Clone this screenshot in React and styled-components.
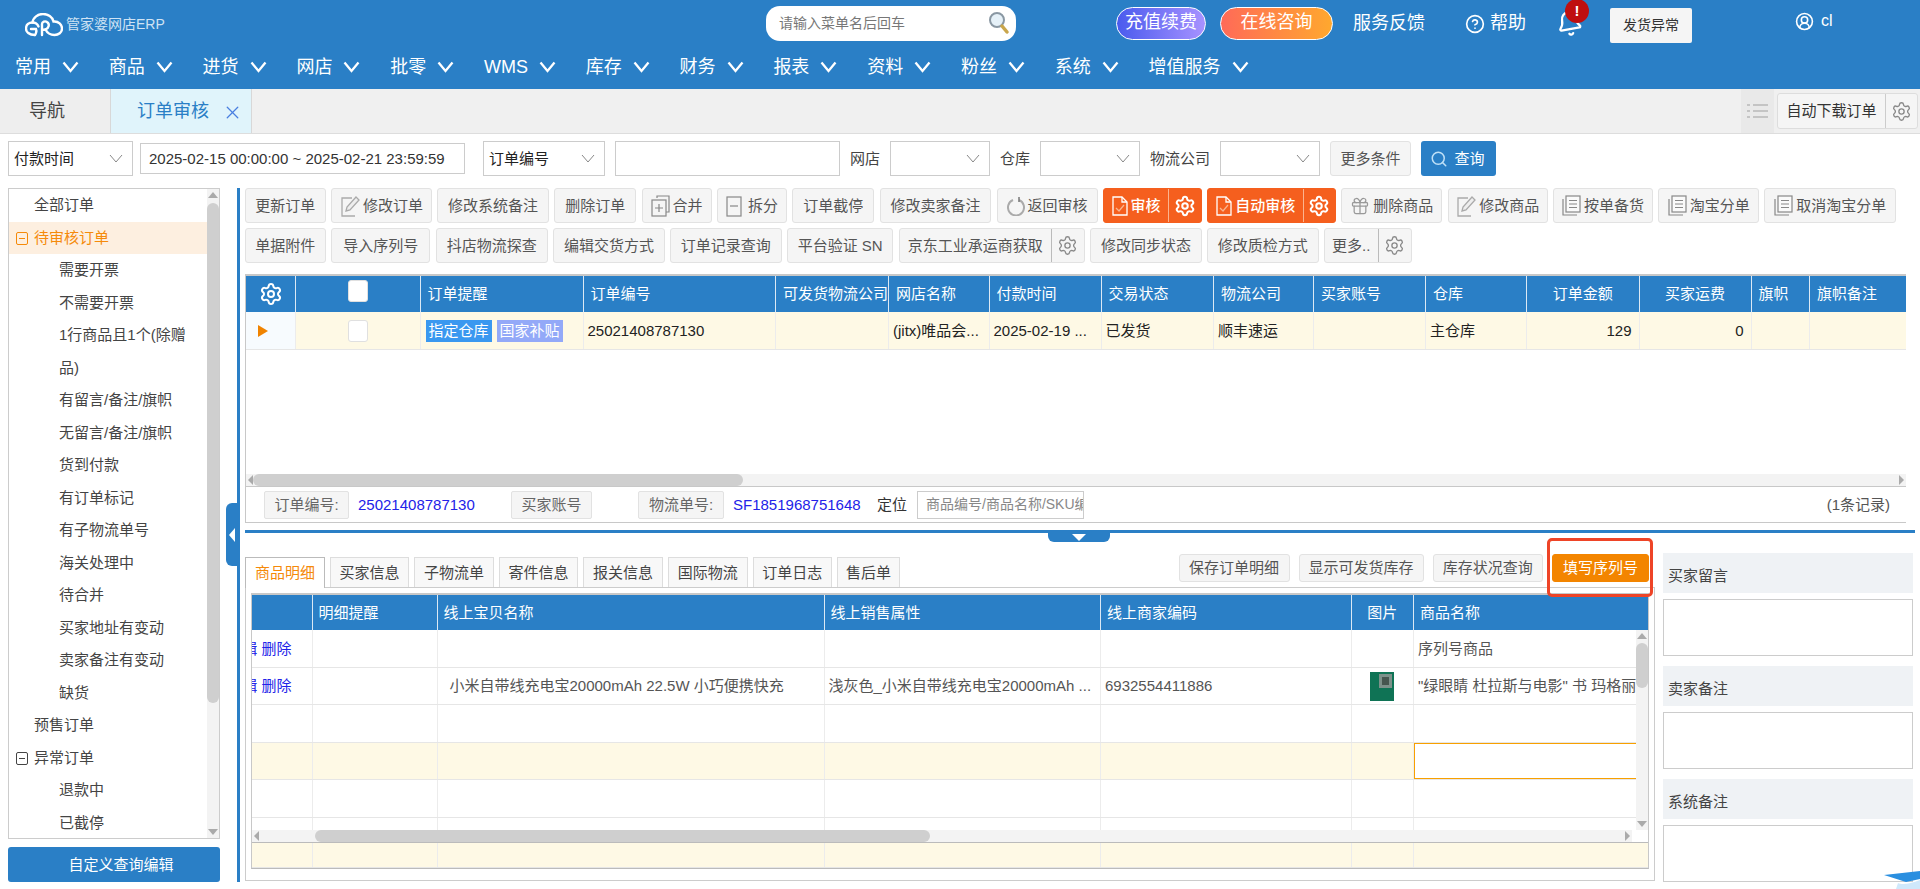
import React from "react";
import styled, { createGlobalStyle } from "styled-components";
import { Settings, Bell, CircleHelp, CircleUserRound, X, Gift, Search } from "lucide-react";

const BLUE = "#2a7fc6";
const CREAM = "#fef9e5";
const FONT = `"Liberation Sans", "Noto Sans CJK SC", sans-serif`;

const GlobalStyle = createGlobalStyle`
  html, body {
    margin: 0;
    height: 100%;
    overflow: hidden;
    background: #fff;
    font-family: ${FONT};
    font-size: 15px;
    line-height: 1.3;
    color: #333;
  }
  * { box-sizing: border-box; }
  svg { flex: none; }
`;

const Page = styled.div`
  position: relative;
  width: 1920px;
  height: 889px;
  overflow: hidden;
`;

/* ---------- header ---------- */
const Header = styled.header`
  height: 89px;
  background: ${BLUE};
  color: #fff;
`;
const TopBar = styled.div`
  height: 46px;
  display: flex;
  align-items: center;
  padding-left: 25px;
`;
const Logo = styled.div`
  width: 139px;
  display: flex;
  align-items: center;
  gap: 3px;
  font-size: 14px;
  color: #cfe3f4;
  white-space: nowrap;
  margin-top: 3px;
`;
const SearchBox = styled.div`
  width: 250px;
  height: 35px;
  margin-left: 602px;
  background: #fff;
  border-radius: 14px;
  display: flex;
  align-items: center;
  justify-content: space-between;
  padding: 0 5px 0 13px;
  font-size: 14px;
  color: #777;
`;
const Pill = styled.div`
  height: 33px;
  width: ${(p) => p.$w}px;
  margin-left: ${(p) => p.$ml}px;
  border: 1px solid #fff;
  border-radius: 17px;
  background: linear-gradient(90deg, ${(p) => p.$from}, ${(p) => p.$to});
  display: flex;
  align-items: center;
  justify-content: center;
  font-size: 18px;
`;
const TopLink = styled.div`
  margin-left: ${(p) => p.$ml}px;
  margin-top: 2px;
  font-size: 18px;
  display: flex;
  align-items: center;
  gap: 5px;
  white-space: nowrap;
`;
const BellWrap = styled.div`
  position: relative;
  width: 26px;
  height: 28px;
  margin-left: 30px;
  margin-top: 2px;
  svg { transform: rotate(-10deg); }
`;
const Badge = styled.span`
  position: absolute;
  left: 9px;
  top: -11px;
  width: 24px;
  height: 24px;
  border-radius: 50%;
  background: #bf0f0f;
  font-size: 15px;
  font-weight: 700;
  display: flex;
  align-items: center;
  justify-content: center;
`;
const ShipAlert = styled.div`
  width: 82px;
  height: 35px;
  margin-left: 28px;
  margin-top: 5px;
  background: #f5f5f5;
  border-radius: 2px;
  color: #333;
  font-size: 14px;
  display: flex;
  align-items: center;
  justify-content: center;
`;
const UserBox = styled.div`
  margin-left: 103px;
  margin-top: -3px;
  display: flex;
  align-items: center;
  gap: 7px;
  font-size: 16px;
`;
const NavBar = styled.nav`
  height: 43px;
  display: flex;
  align-items: center;
  gap: 29.8px;
  padding-left: 15px;
`;
const NavItem = styled.div`
  display: flex;
  align-items: center;
  gap: 11px;
  font-size: 18px;
  white-space: nowrap;
`;

/* ---------- tabs ---------- */
const TabBar = styled.div`
  height: 45px;
  display: flex;
  background: #f0f0f0;
  border-bottom: 1px solid #ddd;
`;
const HomeTab = styled.div`
  width: 110px;
  display: flex;
  align-items: center;
  justify-content: center;
  font-size: 18px;
  color: #444;
  background: #eee;
  padding: 2px 16px 0 0;
`;
const ActiveTab = styled.div`
  width: 142px;
  display: flex;
  align-items: center;
  gap: 13px;
  padding: 2px 0 0 26px;
  font-size: 18px;
  color: ${BLUE};
  background: #e0f4fb;
  border-left: 1px solid #d8d8d8;
  border-right: 1px solid #d8d8d8;
`;
const TabRight = styled.div`
  margin-left: auto;
  display: flex;
  align-items: center;
  padding-right: 2px;
`;
const ListToggle = styled.div`
  width: 33px;
  height: 44px;
  margin-right: 3px;
  background: #e9e9e9;
  display: flex;
  align-items: center;
  justify-content: center;
`;
const DownloadButton = styled.div`
  width: 141px;
  height: 36px;
  display: flex;
  align-items: center;
  background: #f5f5f5;
  border: 1px solid #ddd;
  border-radius: 3px;
  font-size: 15px;
  color: #333;
`;
const DownloadText = styled.span`
  width: 107px;
  text-align: center;
`;
const GearSlot = styled.span`
  flex: ${(p) => (p.$w ? `0 0 ${p.$w}px` : 1)};
  height: 100%;
  display: flex;
  align-items: center;
  justify-content: center;
  border-left: 1px solid ${(p) => p.$line || "#bbb"};
`;

/* ---------- filter row ---------- */
const FilterBar = styled.div`
  height: 54px;
  padding: 7px 0 0 8px;
  display: flex;
  gap: 18px;
`;
const FilterGroup = styled.div`
  height: 35px;
  display: flex;
  align-items: center;
  gap: ${(p) => p.$gap}px;
`;
const SelectBox = styled.div`
  width: ${(p) => p.$w}px;
  height: 35px;
  border: 1px solid #ccc;
  padding: 0 9px 0 5px;
  display: flex;
  align-items: center;
  justify-content: space-between;
  color: #222;
`;
const TextInput = styled.div`
  width: ${(p) => p.$w}px;
  height: ${(p) => p.$h || 35}px;
  border: 1px solid #ccc;
  padding-left: 8px;
  display: flex;
  align-items: center;
  white-space: nowrap;
  overflow: hidden;
  font-size: ${(p) => p.$size || 15}px;
  color: ${(p) => p.$color || "#333"};
`;
const FilterLabel = styled.span`
  width: ${(p) => p.$w}px;
  white-space: nowrap;
  color: #444;
  font-size: 15px;
`;
const PlainButton = styled.div`
  width: ${(p) => p.$w}px;
  height: 35px;
  background: #f5f5f5;
  border: 1px solid #e2e2e2;
  border-radius: 3px;
  display: flex;
  align-items: center;
  justify-content: center;
  color: #555;
`;
const QueryButton = styled.div`
  width: 75px;
  height: 35px;
  background: ${BLUE};
  border-radius: 3px;
  color: #fff;
  display: flex;
  align-items: center;
  justify-content: center;
  gap: 6px;
  padding-right: 2px;
`;

/* ---------- content ---------- */
const Content = styled.div`
  padding-left: 8px;
  display: flex;
  height: 694px;
`;
const Side = styled.aside`
  width: 212px;
  display: flex;
  flex-direction: column;
  gap: 8px;
`;
const TreeBox = styled.div`
  position: relative;
  height: 651px;
  border: 1px solid #ccc;
  overflow: hidden;
`;
const TreeRow = styled.div`
  width: 198px;
  line-height: 32.5px;
  padding: 0 20px 0 ${(p) => (p.$level ? 50 : 25)}px;
  position: relative;
  background: ${(p) => (p.$active ? "#fdefe0" : "transparent")};
  color: ${(p) => (p.$active ? "#f58a0a" : "#444")};
`;
const Fold = styled.span`
  position: absolute;
  left: 7px;
  top: 10px;
  width: 12px;
  height: 13px;
  border: 1px solid currentColor;
  border-radius: 2px;
  &::after {
    content: "";
    position: absolute;
    left: 2px;
    right: 2px;
    top: 5px;
    height: 1px;
    background: currentColor;
  }
`;
const CustomQuery = styled.div`
  height: 35px;
  background: ${BLUE};
  color: #fff;
  border-radius: 3px;
  display: flex;
  align-items: center;
  justify-content: center;
  padding-left: 14px;
`;
const Splitter = styled.div`
  position: relative;
  width: 3px;
  margin-left: 17px;
  background: ${BLUE};
`;
const SplitHandle = styled.div`
  position: absolute;
  left: -11px;
  top: 315px;
  width: 11px;
  height: 63px;
  background: ${BLUE};
  border-radius: 6px 0 0 6px;
  display: flex;
  align-items: center;
  justify-content: center;
  &::after {
    content: "";
    border-style: solid;
    border-width: 7px 6px 7px 0;
    border-color: transparent #fff transparent transparent;
  }
`;
const Main = styled.main`
  width: 1670px;
  margin-left: 5px;
  display: flex;
  flex-direction: column;
`;
const ToolRow = styled.div`
  flex: none;
  display: flex;
  gap: 5.4px;
  height: 35px;
  margin-bottom: 5px;
`;
const ToolButton = styled.div`
  width: ${(p) => p.$w}px;
  flex: none;
  display: flex;
  align-items: center;
  justify-content: center;
  font-size: 15px;
  white-space: nowrap;
  border: 1px solid ${(p) => (p.$primary ? "#f55f1e" : "#e2e2e2")};
  border-radius: 3px;
  background: ${(p) => (p.$primary ? "#f55f1e" : "#f5f5f5")};
  color: ${(p) => (p.$primary ? "#fff" : "#555")};
  font-weight: ${(p) => (p.$primary ? 500 : 400)};
`;
const ToolLabel = styled.span`
  flex: 1;
  display: flex;
  align-items: center;
  justify-content: center;
  gap: 3px;
`;

/* ---------- grids ---------- */
const OrderBox = styled.div`
  flex: none;
  margin-top: 6px;
  width: 1661px;
  border: 1px solid #c8c8c8;
  border-top-width: 2px;
  border-right: 0;
  position: relative;
`;
const GridRow = styled.div`
  display: grid;
  grid-template-columns: ${(p) => p.$cols};
  height: ${(p) => p.$h}px;
  background: ${(p) => p.$bg || "#fff"};
  border-bottom: ${(p) => (p.$head ? "0" : "1px solid #e6e6e6")};
  color: ${(p) => (p.$head ? "#fff" : p.$color || "#222")};
`;
const Cell = styled.div`
  display: flex;
  align-items: center;
  justify-content: ${(p) => p.$justify || "flex-start"};
  padding: 0 ${(p) => p.$right ?? 0}px 0 ${(p) => p.$pad ?? 4}px;
  white-space: nowrap;
  overflow: hidden;
  border-right: 1px solid ${(p) => (p.$head ? "#dbe9f5" : "#ececec")};
  background: ${(p) => p.$bg || "transparent"};
  &:last-child { border-right: 0; }
`;
const Tag = styled.span`
  height: 22px;
  padding: 0 3px;
  margin-right: 5px;
  display: flex;
  align-items: center;
  color: #fff;
  background: ${(p) => p.$bg};
`;
const CheckBox = styled.span`
  width: ${(p) => p.$size}px;
  height: ${(p) => p.$size + 2}px;
  background: #fff;
  border: 1px solid #e0e0e0;
  border-radius: 3px;
  margin-top: ${(p) => p.$mt || 0}px;
`;
const Arrow = styled.span`
  width: 0;
  height: 0;
  border-style: solid;
  border-width: 6px 0 6px 10px;
  border-color: transparent transparent transparent #f08300;
`;
const EmptyArea = styled.div`
  height: 124px;
`;
const HTrack = styled.div`
  position: relative;
  flex: none;
  height: 12px;
  background: #f3f3f3;
  width: ${(p) => p.$w || "100%"};
`;
const HThumb = styled.div`
  position: absolute;
  left: ${(p) => p.$left}px;
  width: ${(p) => p.$w}px;
  top: 0;
  bottom: 0;
  background: #cfcfcf;
  border-radius: 6px;
`;
const ArrowTri = styled.span`
  position: absolute;
  width: 0;
  height: 0;
  border-style: solid;
  ${(p) => p.$side === "left" && "left: 2px; top: 1px; border-width: 5px 5px 5px 0; border-color: transparent #aaa transparent transparent;"}
  ${(p) => p.$side === "right" && "right: 2px; top: 1px; border-width: 5px 0 5px 5px; border-color: transparent transparent transparent #aaa;"}
  ${(p) => p.$side === "up" && "top: 3px; left: 1px; border-width: 0 5px 6px 5px; border-color: transparent transparent #aaa transparent;"}
  ${(p) => p.$side === "down" && "bottom: 3px; left: 1px; border-width: 6px 5px 0 5px; border-color: #aaa transparent transparent transparent;"}
`;
const VTrack = styled.div`
  position: absolute;
  right: 0;
  top: ${(p) => p.$top}px;
  bottom: ${(p) => p.$bottom}px;
  width: 12px;
  background: #f3f3f3;
`;
const VThumb = styled.div`
  position: absolute;
  left: 0;
  right: 0;
  top: ${(p) => p.$top}px;
  height: ${(p) => p.$h}px;
  background: #cfcfcf;
  border-radius: 6px;
`;
const InfoBar = styled.div`
  height: 36px;
  border-top: 1px solid #c8c8c8;
  display: flex;
  align-items: center;
  padding-left: 18px;
`;
const InfoTag = styled.div`
  width: ${(p) => p.$w}px;
  height: 28px;
  background: #f5f5f5;
  border: 1px solid #e2e2e2;
  border-radius: 2px;
  display: flex;
  align-items: center;
  justify-content: center;
  color: #666;
`;
const InfoValue = styled.span`
  width: ${(p) => p.$w}px;
  padding-left: 9px;
  color: #2222e8;
  white-space: nowrap;
`;
const LocateLabel = styled.span`
  width: 40px;
  color: #333;
`;
const RecordCount = styled.span`
  margin-left: auto;
  padding-right: 16px;
  color: #555;
`;
const HDivider = styled.div`
  position: relative;
  flex: none;
  margin-top: 7px;
  height: 3px;
  background: ${BLUE};
`;
const DownHandle = styled.div`
  position: absolute;
  left: 803px;
  top: 2px;
  width: 62px;
  height: 10px;
  background: ${BLUE};
  border-radius: 0 0 6px 6px;
  display: flex;
  align-items: center;
  justify-content: center;
  &::after {
    content: "";
    border-style: solid;
    border-width: 7px 7px 0 7px;
    border-color: #fff transparent transparent transparent;
  }
`;
const Lower = styled.div`
  flex: none;
  margin-top: 20px;
  display: flex;
  gap: 8px;
`;
const DetailPane = styled.div`
  width: 1410px;
`;
const DetailHead = styled.div`
  position: relative;
  height: 34px;
  display: flex;
  justify-content: space-between;
`;
const TabStrip = styled.div`
  display: flex;
  gap: 5px;
  margin-top: 4px;
`;
const DetailTab = styled.div`
  width: ${(p) => p.$w}px;
  height: ${(p) => (p.$active ? 31 : 30)}px;
  display: flex;
  align-items: center;
  justify-content: center;
  background: ${(p) => (p.$active ? "#fff" : "#f8f8f8")};
  border: 1px solid ${(p) => (p.$active ? "#bbb" : "#ddd")};
  border-bottom: 0;
  color: ${(p) => (p.$active ? "#f58a0a" : "#444")};
  position: relative;
  z-index: 1;
`;
const DetailActions = styled.div`
  display: flex;
  gap: 9px;
  margin-top: 1px;
  margin-right: 6px;
`;
const ActionButton = styled.div`
  width: ${(p) => p.$w}px;
  height: 28px;
  display: flex;
  align-items: center;
  justify-content: center;
  background: ${(p) => (p.$orange ? "#f38500" : "#f5f5f5")};
  border: 1px solid ${(p) => (p.$orange ? "#f38500" : "#e2e2e2")};
  border-radius: 3px;
  color: ${(p) => (p.$orange ? "#fff" : "#555")};
`;
const Highlight = styled.div`
  position: absolute;
  left: 1302px;
  top: -15px;
  width: 106px;
  height: 59px;
  border: 3px solid #ee4427;
  border-radius: 5px;
  z-index: 3;
  pointer-events: none;
`;
const DetailBox = styled.div`
  height: 294px;
  border: 1px solid #ccc;
  padding: 5px 5px 0 5px;
`;
const DetailGrid = styled.div`
  position: relative;
  height: 276px;
  border-top: 2px solid #c8c8c8;
  border-bottom: 1px solid #bbb;
  border-left: 1px solid #c8c8c8;
  border-right: 1px solid #c8c8c8;
  display: flex;
  flex-direction: column;
`;
const DetailBody = styled.div`
  flex: none;
  height: 200px;
  overflow: hidden;
`;
const Selected = styled.div`
  height: 100%;
  width: 100%;
  border: 1px solid #f8a000;
  background: #fff;
`;
const FooterRow = styled.div`
  flex: 1;
  border-top: 1px solid #bbb;
`;
const NotePane = styled.div`
  width: 250px;
  display: flex;
  flex-direction: column;
`;
const NoteTitle = styled.div`
  height: 40px;
  background: #eff2f5;
  padding: 5px 0 0 5px;
  display: flex;
  align-items: center;
  color: #444;
`;
const NoteArea = styled.div`
  height: 57px;
  margin: 6px 0 10px;
  border: 1px solid #ccc;
  &:last-child { margin-bottom: 0; }
`;
const Cap = styled.svg`
  position: absolute;
  right: 0;
  bottom: 0;
`;
const LinkText = styled.span`
  color: #2222e8;
`;

/* ---------- small drawings ---------- */
const CloudLogo = () => (
  <svg width="38" height="24" viewBox="0 0 38 24" fill="none" stroke="#fff" strokeWidth="2.4" strokeLinecap="round">
    <path d="M10 22C4 22 1 19 1 15.500C1 11.500 4 9.500 7.500 9.500C8 4.500 13 1 18 1C23 1 27.500 4 28.500 8.500C33.500 8 37 11.500 37 15.500C37 19.500 33.500 22 29.500 22C25 22 22 19.500 20.500 16.500" />
    <path d="M7.500 9.500C10 9.500 12.500 11 13.500 13.500M6 16H11C12 18 10.500 22 10 22" />
    <path d="M17 22V11C17 9 20 7.500 22 9C25 11 24 15 20.500 16.500L17 17" />
  </svg>
);
const Chevron = () => (
  <svg width="17" height="12" viewBox="0 0 17 12" fill="none" stroke="#fff" strokeWidth="2.3">
    <path d="M1.500 1.500L8.500 10L15.500 1.500" />
  </svg>
);
const SelectChevron = () => (
  <svg width="14" height="9" viewBox="0 0 14 9" fill="none" stroke="#888" strokeWidth="1">
    <path d="M1 1L7 8L13 1" />
  </svg>
);
const Glass = () => (
  <svg width="24" height="26" viewBox="0 0 24 26" fill="none">
    <circle cx="10" cy="10" r="7" fill="#e6f1f8" stroke="#8a98a3" strokeWidth="2" />
    <path d="M15 16L20 22" stroke="#c9a64c" strokeWidth="3.500" strokeLinecap="round" />
  </svg>
);
const ListLines = () => (
  <svg width="21" height="14" viewBox="0 0 21 14" fill="#c4c4c4">
    <rect x="0" y="0" width="3" height="2" />
    <rect x="6" y="0" width="15" height="2" />
    <rect x="0" y="6" width="3" height="2" />
    <rect x="6" y="6" width="15" height="2" />
    <rect x="0" y="12" width="3" height="2" />
    <rect x="6" y="12" width="15" height="2" />
  </svg>
);
const EditIcon = () => (
  <svg width="20" height="22" viewBox="0 0 20 22" fill="none" stroke="#aaa" strokeWidth="1.300">
    <path d="M15 21H2V3H12" />
    <path d="M6 16L7 12L16 2L19 5L10 15Z" fill="#eee" />
  </svg>
);
const MergeIcon = ({ minus }) => (
  <svg width="19" height="22" viewBox="0 0 19 22" fill="none" stroke="#888" strokeWidth="1.200">
    {!minus && <path d="M6 3V1H18V17H15" />}
    <rect x="1" y={minus ? 2 : 5} width="14" height={minus ? 19 : 16} />
    {minus ? <path d="M4 11H12" /> : <path d="M4 13H12M8 9V17" />}
  </svg>
);
const ReturnIcon = () => (
  <svg width="18" height="20" viewBox="0 0 18 20" fill="none" stroke="#aaa" strokeWidth="2">
    <path d="M6 4A8 8 0 1 0 12 4" />
    <path d="M12 1V6" stroke="#777" strokeWidth="1.500" />
  </svg>
);
const DocCheck = () => (
  <svg width="16" height="20" viewBox="0 0 16 20" fill="none" stroke="#fff" strokeWidth="1.300">
    <path d="M1 1H10L15 6V19H1Z" />
    <path d="M10 1V6H15" />
    <path d="M4 12L7 15L12 9" stroke="#f9b48f" />
  </svg>
);
const StackDoc = () => (
  <svg width="19" height="21" viewBox="0 0 19 21" fill="none" stroke="#888" strokeWidth="1.200">
    <path d="M1 4V20H15" />
    <rect x="4" y="1" width="14" height="16" fill="#fafafa" />
    <path d="M7 5.500H15M7 9H15M7 12.500H15" />
  </svg>
);
const Thumb = () => (
  <svg width="24" height="29" viewBox="0 0 24 29">
    <rect width="24" height="29" fill="#0f7355" />
    <rect x="9" y="2" width="13" height="14" fill="#7d918a" />
    <rect x="12" y="5" width="7" height="8" fill="#46564f" />
  </svg>
);

const ICONS = {
  edit: <EditIcon />,
  merge: <MergeIcon />,
  split: <MergeIcon minus />,
  back: <ReturnIcon />,
  gift: <Gift size={20} color="#999" strokeWidth={1.5} />,
  stack: <StackDoc />,
  doc: <DocCheck />,
};

const NAV = ["常用", "商品", "进货", "网店", "批零", "WMS", "库存", "财务", "报表", "资料", "粉丝", "系统", "增值服务"];

const TREE = [
  { text: "全部订单" },
  { text: "待审核订单", fold: true, active: true },
  { text: "需要开票", level: 1 },
  { text: "不需要开票", level: 1 },
  { text: "1行商品且1个(除赠品)", level: 1 },
  { text: "有留言/备注/旗帜", level: 1 },
  { text: "无留言/备注/旗帜", level: 1 },
  { text: "货到付款", level: 1 },
  { text: "有订单标记", level: 1 },
  { text: "有子物流单号", level: 1 },
  { text: "海关处理中", level: 1 },
  { text: "待合并", level: 1 },
  { text: "买家地址有变动", level: 1 },
  { text: "卖家备注有变动", level: 1 },
  { text: "缺货", level: 1 },
  { text: "预售订单" },
  { text: "异常订单", fold: true },
  { text: "退款中", level: 1 },
  { text: "已截停", level: 1 },
];

const TOOLS_1 = [
  { text: "更新订单", w: 80.5 },
  { text: "修改订单", w: 101, icon: "edit" },
  { text: "修改系统备注", w: 111.5 },
  { text: "删除订单", w: 82 },
  { text: "合并", w: 70, icon: "merge" },
  { text: "拆分", w: 70, icon: "split" },
  { text: "订单截停", w: 82 },
  { text: "修改卖家备注", w: 111.5 },
  { text: "返回审核", w: 101, icon: "back" },
  { text: "审核", w: 99, icon: "doc", primary: true, gear: 33 },
  { text: "自动审核", w: 128.5, icon: "doc", primary: true, gear: 32 },
  { text: "删除商品", w: 101, icon: "gift" },
  { text: "修改商品", w: 100, icon: "edit" },
  { text: "按单备货", w: 100, icon: "stack" },
  { text: "淘宝分单", w: 100.5, icon: "stack" },
  { text: "取消淘宝分单", w: 132, icon: "stack" },
];
const TOOLS_2 = [
  { text: "单据附件", w: 80.5 },
  { text: "导入序列号", w: 99.5 },
  { text: "抖店物流探查", w: 112 },
  { text: "编辑交货方式", w: 111.5 },
  { text: "订单记录查询", w: 111.5 },
  { text: "平台验证 SN", w: 106.5 },
  { text: "京东工业承运商获取", w: 186, gear: 33 },
  { text: "修改同步状态", w: 111.5 },
  { text: "修改质检方式", w: 111.5 },
  { text: "更多..", w: 87.5, gear: 33 },
];

const ORDER_COLS = "50px 124.5px 163px 192.5px 113px 100.5px 112px 112.5px 100px 112px 101px 112.5px 112px 58.5px 96px";
const ORDER_HEAD = [
  ["订单提醒"], ["订单编号"], ["可发货物流公司"], ["网店名称"], ["付款时间"], ["交易状态"], ["物流公司"], ["买家账号"], ["仓库"],
  ["订单金额", "center"], ["买家运费", "center"], ["旗帜"], ["旗帜备注"],
];

const DETAIL_COLS = "60.5px 125px 387px 276.5px 250.5px 62.5px 1fr";
const DETAIL_HEAD = [["", "flex-start"], ["明细提醒"], ["线上宝贝名称"], ["线上销售属性"], ["线上商家编码"], ["图片", "center"], ["商品名称"]];
const DETAIL_TABS = [
  ["商品明细", 80], ["买家信息", 79], ["子物流单", 80], ["寄件信息", 79], ["报关信息", 80], ["国际物流", 79.5], ["订单日志", 79.5], ["售后单", 63],
];
const ACTIONS = [["保存订单明细", 111], ["显示可发货库存", 125], ["库存状况查询", 110.5]];

function Tool({ item }) {
  const gearColor = item.primary ? "#fff" : "#888";
  return (
    <ToolButton $w={item.w} $primary={item.primary}>
      <ToolLabel>
        {item.icon && ICONS[item.icon]}
        {item.text}
      </ToolLabel>
      {item.gear && (
        <GearSlot $w={item.gear} $line={item.primary ? "#fbb48f" : "#bbb"}>
          <Settings size={item.primary ? 22 : 21} color={gearColor} strokeWidth={item.primary ? 2.2 : 1.5} />
        </GearSlot>
      )}
    </ToolButton>
  );
}

function EmptyDetailRow({ bg, selected }) {
  return (
    <GridRow $cols={DETAIL_COLS} $h={selected ? 37 : 38} $bg={bg}>
      {[0, 1, 2, 3, 4, 5].map((i) => <Cell key={i} />)}
      <Cell $pad={0}>{selected && <Selected />}</Cell>
    </GridRow>
  );
}

export default function App() {
  return (
    <Page>
      <GlobalStyle />
      <Header>
        <TopBar>
          <Logo><CloudLogo />管家婆网店ERP</Logo>
          <SearchBox>请输入菜单名后回车<Glass /></SearchBox>
          <Pill $w={90} $ml={100} $from="#4a5bee" $to="#a792ff">充值续费</Pill>
          <Pill $w={113} $ml={14} $from="#ff6a58" $to="#ffa82e">在线咨询</Pill>
          <TopLink $ml={20}>服务反馈</TopLink>
          <TopLink $ml={40}><CircleHelp size={20} />帮助</TopLink>
          <BellWrap>
            <Bell size={27} strokeWidth={2} />
            <Badge>!</Badge>
          </BellWrap>
          <ShipAlert>发货异常</ShipAlert>
          <UserBox><CircleUserRound size={19} />cl</UserBox>
        </TopBar>
        <NavBar>
          {NAV.map((n) => <NavItem key={n}>{n}<Chevron /></NavItem>)}
        </NavBar>
      </Header>

      <TabBar>
        <HomeTab>导航</HomeTab>
        <ActiveTab>订单审核<X size={21} color="#4a7fe0" strokeWidth={1.5} /></ActiveTab>
        <TabRight>
          <ListToggle><ListLines /></ListToggle>
          <DownloadButton>
            <DownloadText>自动下载订单</DownloadText>
            <GearSlot $line="#ccc"><Settings size={21} color="#888" strokeWidth={1.5} /></GearSlot>
          </DownloadButton>
        </TabRight>
      </TabBar>

      <FilterBar>
        <FilterGroup $gap={7}>
          <SelectBox $w={125}>付款时间<SelectChevron /></SelectBox>
          <TextInput $w={325} $h={31}>2025-02-15 00:00:00 ~ 2025-02-21 23:59:59</TextInput>
        </FilterGroup>
        <FilterGroup $gap={10}>
          <SelectBox $w={122}>订单编号<SelectChevron /></SelectBox>
          <TextInput $w={225} />
          <FilterLabel $w={30}>网店</FilterLabel>
          <SelectBox $w={100}><span /><SelectChevron /></SelectBox>
          <FilterLabel $w={30}>仓库</FilterLabel>
          <SelectBox $w={100}><span /><SelectChevron /></SelectBox>
          <FilterLabel $w={60}>物流公司</FilterLabel>
          <SelectBox $w={100}><span /><SelectChevron /></SelectBox>
          <PlainButton $w={81}>更多条件</PlainButton>
          <QueryButton><Search size={18} color="#bfe0f7" strokeWidth={2} />查询</QueryButton>
        </FilterGroup>
      </FilterBar>

      <Content>
        <Side>
          <TreeBox>
            {TREE.map((t) => (
              <TreeRow key={t.text} $level={t.level} $active={t.active}>
                {t.fold && <Fold />}
                {t.text}
              </TreeRow>
            ))}
            <VTrack $top={0} $bottom={0}>
              <ArrowTri $side="up" />
              <VThumb $top={14} $h={500} />
              <ArrowTri $side="down" />
            </VTrack>
          </TreeBox>
          <CustomQuery>自定义查询编辑</CustomQuery>
        </Side>
        <Splitter><SplitHandle /></Splitter>
        <Main>
          <ToolRow>{TOOLS_1.map((t) => <Tool key={t.text} item={t} />)}</ToolRow>
          <ToolRow>{TOOLS_2.map((t) => <Tool key={t.text} item={t} />)}</ToolRow>

          <OrderBox>
            <GridRow $cols={ORDER_COLS} $h={36} $bg={BLUE} $head>
              <Cell $head $pad={0} $justify="center"><Settings size={24} color="#fff" strokeWidth={2} /></Cell>
              <Cell $head $pad={0} $justify="center"><CheckBox $size={20} $mt={-6} /></Cell>
              {ORDER_HEAD.map(([h, j]) => (
                <Cell key={h} $head $pad={j ? 0 : 7} $justify={j}>{h}</Cell>
              ))}
            </GridRow>
            <GridRow $cols={ORDER_COLS} $h={38} $bg={CREAM}>
              <Cell $pad={12} $bg="#f7fbfe"><Arrow /></Cell>
              <Cell $pad={0} $justify="center"><CheckBox $size={20} /></Cell>
              <Cell $pad={5}>
                <Tag $bg="#3a98f0">指定仓库</Tag>
                <Tag $bg="#93a9f8">国家补贴</Tag>
              </Cell>
              <Cell>25021408787130</Cell>
              <Cell />
              <Cell>(jitx)唯品会...</Cell>
              <Cell>2025-02-19 ...</Cell>
              <Cell>已发货</Cell>
              <Cell>顺丰速运</Cell>
              <Cell />
              <Cell>主仓库</Cell>
              <Cell $pad={0} $right={7} $justify="flex-end">129</Cell>
              <Cell $pad={0} $right={7} $justify="flex-end">0</Cell>
              <Cell />
              <Cell />
            </GridRow>
            <EmptyArea />
            <HTrack>
              <ArrowTri $side="left" />
              <HThumb $left={7} $w={490} />
              <ArrowTri $side="right" />
            </HTrack>
            <InfoBar>
              <InfoTag $w={85}>订单编号:</InfoTag>
              <InfoValue $w={162}>25021408787130</InfoValue>
              <InfoTag $w={81}>买家账号</InfoTag>
              <InfoValue $w={46} />
              <InfoTag $w={86}>物流单号:</InfoTag>
              <InfoValue $w={153}>SF1851968751648</InfoValue>
              <LocateLabel>定位</LocateLabel>
              <TextInput $w={167} $h={28} $color="#888" $size={14}>商品编号/商品名称/SKU编码</TextInput>
              <RecordCount>(1条记录)</RecordCount>
            </InfoBar>
          </OrderBox>

          <HDivider><DownHandle /></HDivider>

          <Lower>
            <DetailPane>
              <DetailHead>
                <TabStrip>
                  {DETAIL_TABS.map(([t, w], i) => (
                    <DetailTab key={t} $w={w} $active={i === 0}>{t}</DetailTab>
                  ))}
                </TabStrip>
                <DetailActions>
                  {ACTIONS.map(([t, w]) => <ActionButton key={t} $w={w}>{t}</ActionButton>)}
                  <ActionButton $w={97} $orange>填写序列号</ActionButton>
                </DetailActions>
                <Highlight />
              </DetailHead>
              <DetailBox>
                <DetailGrid>
                  <GridRow $cols={DETAIL_COLS} $h={35} $bg={BLUE} $head>
                    {DETAIL_HEAD.map(([h, j], i) => (
                      <Cell key={i} $head $pad={j === "center" ? 0 : 6} $justify={j}>{h}</Cell>
                    ))}
                  </GridRow>
                  <DetailBody>
                    <GridRow $cols={DETAIL_COLS} $h={38} $color="#555">
                      <Cell $pad={0} $right={20} $justify="flex-end"><LinkText>编辑 删除</LinkText></Cell>
                      <Cell /><Cell /><Cell /><Cell /><Cell />
                      <Cell>序列号商品</Cell>
                    </GridRow>
                    <GridRow $cols={DETAIL_COLS} $h={37} $color="#555">
                      <Cell $pad={0} $right={20} $justify="flex-end"><LinkText>编辑 删除</LinkText></Cell>
                      <Cell />
                      <Cell $pad={12}>小米自带线充电宝20000mAh 22.5W 小巧便携快充</Cell>
                      <Cell>浅灰色_小米自带线充电宝20000mAh ...</Cell>
                      <Cell>6932554411886</Cell>
                      <Cell $pad={0} $justify="center"><Thumb /></Cell>
                      <Cell>"绿眼睛 杜拉斯与电影" 书 玛格丽特·杜拉斯</Cell>
                    </GridRow>
                    <EmptyDetailRow />
                    <EmptyDetailRow bg={CREAM} selected />
                    <EmptyDetailRow />
                    <EmptyDetailRow />
                  </DetailBody>
                  <HTrack $w="1380px">
                    <ArrowTri $side="left" />
                    <HThumb $left={63} $w={615} />
                    <ArrowTri $side="right" />
                  </HTrack>
                  <FooterRow>
                    <GridRow $cols={DETAIL_COLS} $h={25} $bg={CREAM}>
                      {[0, 1, 2, 3, 4, 5, 6].map((i) => <Cell key={i} />)}
                    </GridRow>
                  </FooterRow>
                  <VTrack $top={35} $bottom={38}>
                    <ArrowTri $side="up" />
                    <VThumb $top={13} $h={45} />
                    <ArrowTri $side="down" />
                  </VTrack>
                </DetailGrid>
              </DetailBox>
            </DetailPane>
            <NotePane>
              <NoteTitle>买家留言</NoteTitle>
              <NoteArea />
              <NoteTitle>卖家备注</NoteTitle>
              <NoteArea />
              <NoteTitle>系统备注</NoteTitle>
              <NoteArea />
            </NotePane>
          </Lower>
        </Main>
      </Content>

      <Cap width="36" height="18" viewBox="0 0 36 18">
        <path d="M0 4L36 0V8L22 11Z" fill="#2a8fe0" />
        <path d="M14 12C18 14 26 13 36 9V18H12Z" fill="#cfe8fb" />
      </Cap>
    </Page>
  );
}
